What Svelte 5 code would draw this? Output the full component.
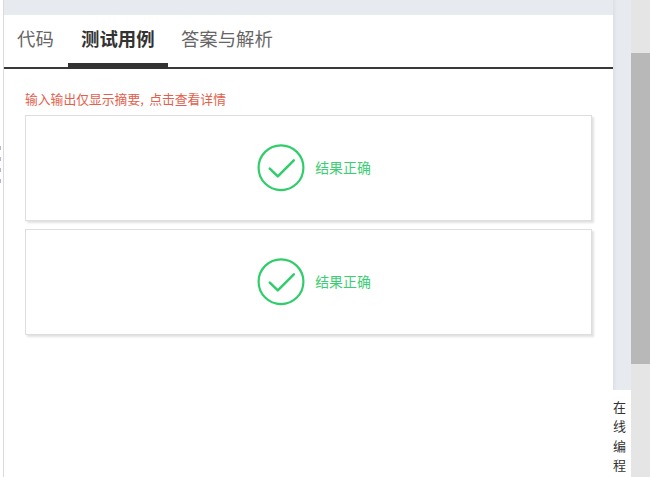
<script>
  let tabs = ['代码', '测试用例', '答案与解析'];
  let active = $state('测试用例');
  let results = [
    { id: 1, text: '结果正确' },
    { id: 2, text: '结果正确' }
  ];
</script>

<div class="page">
  <div class="handle">
    <i></i><i></i><i></i><i></i>
  </div>

  <div class="main">
    <div class="topbar"></div>
    <div class="panel">
      <div class="tabs">
        {#each tabs as tab}
          <button class="tab" class:active={tab === active} onclick={() => (active = tab)}>{tab}</button>
        {/each}
      </div>

      <div class="content">
        <p class="tip">输入输出仅显示摘要<span class="comma">,</span>点击查看详情</p>
        {#each results as result (result.id)}
          <div class="card">
            <svg class="icon" viewBox="0 0 48 48">
              <circle cx="24" cy="23.7" r="22.4" />
              <path d="M12.8 24.6 L20.8 32.4 L36.8 16.4" />
            </svg>
            <span class="status">{result.text}</span>
          </div>
        {/each}
      </div>
    </div>
  </div>

  <div class="side">
    <div class="gutter"></div>
    <div class="label">在线编程</div>
  </div>

  <div class="scrollbar">
    <div class="thumb"></div>
  </div>
</div>

<style>
:global(body) {
  margin: 0;
  overflow: hidden;
}

.page {
  display: flex;
  width: 650px;
  height: 477px;
  background: #fff;
  font-family: "Noto Sans CJK SC", sans-serif;
}

.handle {
  box-sizing: border-box;
  flex: none;
  width: 4px;
  padding-top: 146px;
  border-right: 1px solid #d9dbde;
}
.handle i {
  display: block;
  width: 1px;
  height: 4px;
  margin-bottom: 7px;
  background: #b4b8d6;
}

.main {
  flex: none;
  width: 609px;
}
.topbar {
  height: 15px;
  background: #e7ebf0;
}

.tabs {
  box-sizing: border-box;
  display: flex;
  height: 54px;
  border-bottom: 2px solid #38393b;
}
.tab {
  box-sizing: border-box;
  height: 54px;
  padding: 0 13.2px 2px;
  border: 0;
  border-bottom: 6px solid transparent;
  background: none;
  color: #666;
  font: 18.4px/46px "Noto Sans CJK SC", sans-serif;
  white-space: nowrap;
}
.tab.active {
  border-bottom-color: #333;
  color: #333;
  font-weight: bold;
}
.tab:first-child {
  padding-right: 14px;
  padding-left: 13px;
}

.content {
  padding: 21px 21px 0;
}
.tip {
  margin: 0;
  height: 25px;
  color: #e3604c;
  font-size: 12.8px;
  line-height: 18px;
}
.comma {
  display: inline-block;
  width: 9px;
}

.card {
  box-sizing: border-box;
  display: flex;
  align-items: center;
  justify-content: center;
  width: 567px;
  height: 106px;
  margin-bottom: 8px;
  padding-left: 11px;
  border: 1px solid #dedede;
  box-shadow: 2px 2px 2px #e2e2e2;
  color: #3bcf74;
  font-size: 13.9px;
  line-height: 20px;
}
.icon {
  width: 48px;
  height: 48px;
  margin-right: 10px;
  fill: none;
  stroke: #30cd6b;
  stroke-width: 2.2;
  stroke-linecap: round;
  stroke-linejoin: round;
}
.icon path {
  stroke-width: 2.5;
}
.status {
  padding-bottom: 3px;
}

.side {
  flex: none;
  width: 18px;
}
.gutter {
  height: 390px;
  background: linear-gradient(to right, #dcdfe5, #e7ebf0 4px);
}
.label {
  width: 13px;
  padding-top: 7px;
  color: #333;
  font-size: 13px;
  line-height: 19.4px;
}

.scrollbar {
  flex: 1;
  padding-top: 53px;
  background: #e5e5e5;
}
.thumb {
  height: 311px;
  background: #b8b8b8;
}
</style>
